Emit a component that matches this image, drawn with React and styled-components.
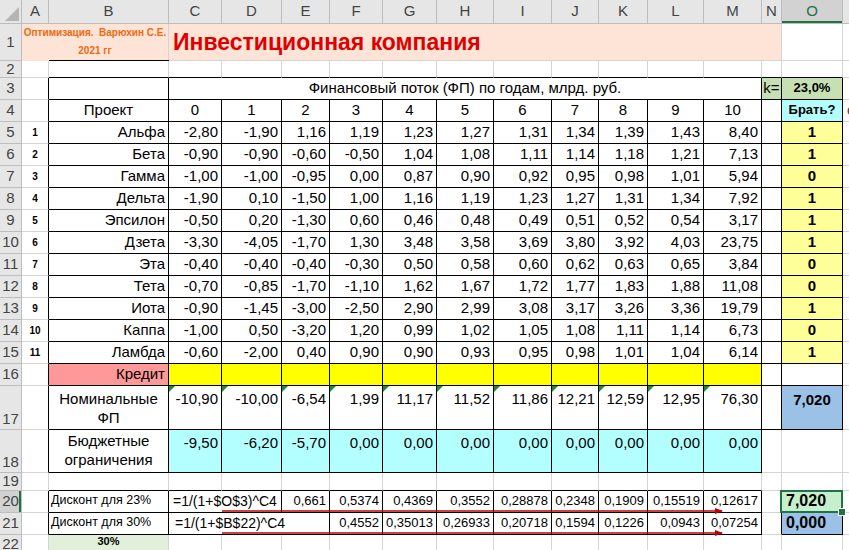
import React from "react";
import styled, { createGlobalStyle } from "styled-components";

const Global = createGlobalStyle`
  html,body{margin:0;padding:0;background:#fff;}
  body{font-family:"Liberation Sans",Arial,sans-serif;}
`;

const colW = [22,27,120,53,60,48,53,54,57,58,47,49,56,58,20,61];
const rowH = [24,37,17,22,22,...Array(11).fill(22),22,44,43,18,22,22];

const Sheet = styled.div`
  position: relative;
  width: 849px;
  height: 550px;
  overflow: hidden;
  display: grid;
  grid-template-columns: ${colW.map(w=>w+"px").join(" ")} 1fr;
  grid-template-rows: ${rowH.map(h=>h+"px").join(" ")} 1fr;
`;

const Cell = styled.div`
  grid-column: ${p=>p.$c+1} / span ${p=>p.$cs};
  grid-row: ${p=>p.$r+1} / span ${p=>p.$rs};
  box-sizing: border-box;
  position: relative;
  background: ${p=>p.$bg || "transparent"};
  border-right: 1px solid ${p=>p.$rb};
  border-bottom: 1px solid ${p=>p.$bb};
  display: flex;
  flex-direction: column;
  justify-content: ${p=>p.$valign==="top"?"flex-start":p.$valign==="middle"?"center":"flex-end"};
  align-items: ${p=>p.$align==="left"?"flex-start":p.$align==="center"?"center":"flex-end"};
  text-align: ${p=>p.$align};
  padding: ${p=>p.$pad || "0 3px 1px"};
  font-size: ${p=>p.$size||15}px;
  font-weight: ${p=>p.$bold?700:400};
  color: ${p=>p.$color||"#000"};
  white-space: nowrap;
  line-height: 1.25;
  overflow: visible;
  z-index: ${p=>p.$z||0};
  &::before{
    content: "";
    display: ${p=>p.$tri?"block":"none"};
    position: absolute; left:0; top:0;
    border-top: 6px solid #1e8a3a; border-right: 6px solid transparent;
  }
`;

const UnderB = styled.span`
  position:absolute; left:27px; right:-1px; bottom:-1px; height:1px; background:#000;
`;

const HeadCell = styled(Cell)`
  background: ${p=>p.$sel?"#d2d2d2":"#e6e6e6"};
  color: ${p=>p.$sel&&p.$r===0?"#217346":"#444"};
  justify-content: center;
  align-items: center;
  padding: 0;
  font-size: 15px;
  ${p=>p.$sel&&p.$r===0?"box-shadow: inset 0 -2px 0 #217346;":""}
  ${p=>p.$sel&&p.$c===0?"box-shadow: inset -2px 0 0 #217346;":""}
`;

const Corner = styled.svg`position:absolute; left:5px; top:7px;`;

const Selected = styled.div`
  position:absolute; inset:-1px -1px -1px -2px;
  border:2px solid #217346;
  &::after{content:"";position:absolute;right:-5px;bottom:-5px;width:6px;height:6px;background:#217346;border:1px solid #fff;}
`;

const Arrows = styled.svg`position:absolute; left:0; top:0; pointer-events:none; z-index:5;`;

const P = "#fde4d6", Y = "#ffff00", LY = "#ffff99", CY = "#b3ffff", GR = "#c6e0b4", BL = "#9bc2e6";

const projects = [
["Альфа","-2,80 -1,90 1,16 1,19 1,23 1,27 1,31 1,34 1,39 1,43 8,40",1],
["Бета","-0,90 -0,90 -0,60 -0,50 1,04 1,08 1,11 1,14 1,18 1,21 7,13",1],
["Гамма","-1,00 -1,00 -0,95 0,00 0,87 0,90 0,92 0,95 0,98 1,01 5,94",0],
["Дельта","-1,90 0,10 -1,50 1,00 1,16 1,19 1,23 1,27 1,31 1,34 7,92",1],
["Эпсилон","-0,50 0,20 -1,30 0,60 0,46 0,48 0,49 0,51 0,52 0,54 3,17",1],
["Дзета","-3,30 -4,05 -1,70 1,30 3,48 3,58 3,69 3,80 3,92 4,03 23,75",1],
["Эта","-0,40 -0,40 -0,40 -0,30 0,50 0,58 0,60 0,62 0,63 0,65 3,84",0],
["Тета","-0,70 -0,85 -1,70 -1,10 1,62 1,67 1,72 1,77 1,83 1,88 11,08",0],
["Иота","-0,90 -1,45 -3,00 -2,50 2,90 2,99 3,08 3,17 3,26 3,36 19,79",1],
["Каппа","-1,00 0,50 -3,20 1,20 0,99 1,02 1,05 1,08 1,11 1,14 6,73",0],
["Ламбда","-0,60 -2,00 0,40 0,90 0,90 0,93 0,95 0,98 1,01 1,04 6,14",1],
];
const nom = "-10,90 -10,00 -6,54 1,99 11,17 11,52 11,86 12,21 12,59 12,95 76,30".split(" ");
const bud = "-9,50 -6,20 -5,70 0,00 0,00 0,00 0,00 0,00 0,00 0,00 0,00".split(" ");
const d23 = "0,661 0,5374 0,4369 0,3552 0,28878 0,2348 0,1909 0,15519 0,12617".split(" ");
const d30 = "0,4552 0,35013 0,26933 0,20718 0,1594 0,1226 0,0943 0,07254".split(" ");

function buildCells() {
  const cells = [];
  const add = (r,c,o={}) => cells.push({r,c,rs:1,cs:1,align:"right",...o});
  add(1,1,{cs:2,bg:P,align:"center",valign:"top",size:10,bold:true,color:"#ed6a12",pad:"3px 0 0",under:true,text:<>Оптимизация.&nbsp; Варюхин С.Е.<br/><span style={{lineHeight:"22px"}}>2021 гг</span></>});
  add(1,3,{cs:12,bg:P,align:"left",valign:"middle",size:23,bold:true,color:"#e00000",pad:"0 4px",text:"Инвестиционная компания"});
  add(3,2,{box:true});
  add(3,3,{cs:11,box:true,align:"center",text:"Финансовый поток (ФП) по годам, млрд. руб."});
  add(3,14,{box:true,bg:GR,align:"center",pad:"0 0 1px",text:"k="});
  add(3,15,{box:true,bg:GR,align:"center",bold:true,size:13,pad:"0 0 3px",text:"23,0%"});
  add(4,2,{box:true,align:"center",text:"Проект"});
  for (let i=0;i<=10;i++) add(4,3+i,{box:true,align:"center",text:String(i)});
  add(4,14,{box:true});
  add(4,15,{box:true,bg:CY,align:"center",bold:true,size:13,pad:"0 0 3px",text:"Брать?"});
  add(4,16,{align:"left",text:"с",color:"#444",pad:"0 0 1px 4px"});
  projects.forEach(([n,v,t],i)=>{
    const r=5+i;
    add(r,1,{align:"center",bold:true,size:10,pad:"0 0 4px",text:String(i+1)});
    add(r,2,{box:true,text:n});
    v.split(" ").forEach((x,j)=>add(r,3+j,{box:true,text:x}));
    add(r,14,{box:true});
    add(r,15,{box:true,bg:LY,align:"center",bold:true,text:String(t)});
  });
  add(16,2,{box:true,bg:"#ff9999",text:"Кредит"});
  for (let i=0;i<11;i++) add(16,3+i,{box:true,bg:Y});
  add(16,14,{box:true}); add(16,15,{box:true});
  add(17,2,{box:true,align:"center",valign:"top",pad:"4px 0 0",text:<>Номинальные<br/>ФП</>});
  nom.forEach((x,j)=>add(17,3+j,{box:true,valign:"top",pad:"4px 3px 0",tri:true,text:x}));
  add(17,14,{box:true});
  add(17,15,{box:true,bg:BL,align:"center",valign:"top",bold:true,pad:"5px 0 0",text:"7,020"});
  add(18,2,{box:true,align:"center",valign:"top",pad:"2px 0 0",text:<>Бюджетные<br/>ограничения</>});
  bud.forEach((x,j)=>add(18,3+j,{box:true,bg:CY,valign:"top",pad:"4px 3px 0",text:x}));
  add(20,2,{box:true,align:"left",size:12.5,pad:"0 2px 3px",text:"Дисконт для 23%"});
  add(20,3,{cs:2,box:true,align:"left",size:14,pad:"0 4px 2px",text:"=1/(1+$O$3)^C4"});
  d23.forEach((x,j)=>add(20,5+j,{box:true,size:13,pad:"0 3px 3px",text:x}));
  add(20,15,{bg:"#c6efce",align:"left",bold:true,size:16,pad:"0 4px 1px",text:"7,020",sel:true,z:3});
  add(21,2,{box:true,align:"left",size:12.5,pad:"0 2px 3px",text:"Дисконт для 30%"});
  add(21,3,{cs:3,box:true,align:"left",size:14,pad:"0 6px 2px",text:"=1/(1+$B$22)^C4"});
  d30.forEach((x,j)=>add(21,6+j,{box:true,size:13,pad:"0 3px 3px",text:x}));
  add(21,15,{box:true,bg:BL,align:"left",bold:true,size:16,pad:"0 4px 1px",text:"0,000"});
  add(22,2,{bg:"#e2efda",align:"center",valign:"top",bold:true,size:11,pad:"0",text:"30%"});

  const black = new Set();
  cells.forEach(c=>{
    if(!c.box) return;
    for(let j=c.c;j<c.c+c.cs;j++){ black.add(`b${c.r+c.rs-1},${j}`); black.add(`b${c.r-1},${j}`); }
    for(let i=c.r;i<c.r+c.rs;i++){ black.add(`r${i},${c.c+c.cs-1}`); black.add(`r${i},${c.c-1}`); }
  });
  const covered = new Set();
  cells.forEach(c=>{for(let i=c.r;i<c.r+c.rs;i++)for(let j=c.c;j<c.c+c.cs;j++)covered.add(`${i},${j}`);});
  for(let i=1;i<=22;i++)for(let j=1;j<=16;j++) if(!covered.has(`${i},${j}`)) add(i,j,{});
  const G="#d4d4d4";
  cells.forEach(c=>{
    let rb=false,bb=false;
    for(let i=c.r;i<c.r+c.rs;i++) if(black.has(`r${i},${c.c+c.cs-1}`)) rb=true;
    for(let j=c.c;j<c.c+c.cs;j++) if(black.has(`b${c.r+c.rs-1},${j}`)) bb=true;
    c.rbC = rb?"#000":G; c.bbC = bb?"#000":G;
    if(c.under) c.bbC = P;
  });
  return cells;
}

const letters = ["A","B","C","D","E","F","G","H","I","J","K","L","M","N","O",""];

export default function App(){
  const cells = buildCells();
  return (
    <>
      <Global/>
      <Sheet>
        <HeadCell $c={0} $r={0} $cs={1} $rs={1} $rb="#bdbdbd" $bb="#bdbdbd">
          <Corner width="14" height="14"><polygon points="14,0 14,14 0,14" fill="#b5b5b5"/></Corner>
        </HeadCell>
        {letters.map((l,i)=>(
          <HeadCell key={"h"+i} $c={i+1} $r={0} $cs={1} $rs={1} $rb="#bdbdbd" $bb="#bdbdbd" $sel={i===14}>{l}</HeadCell>
        ))}
        {Array.from({length:22},(_,i)=>(
          <HeadCell key={"r"+i} $c={0} $r={i+1} $cs={1} $rs={1} $rb="#bdbdbd" $bb="#bdbdbd" $sel={i+1===20}
            style={{justifyContent:i+1===17||i+1===18?"flex-end":i+1===22?"flex-start":"center"}}>{i+1}</HeadCell>
        ))}
        {cells.map((c,k)=>(
          <Cell key={k} $c={c.c} $r={c.r} $cs={c.cs} $rs={c.rs} $bg={c.bg} $align={c.align} $valign={c.valign}
            $bold={c.bold} $size={c.size} $color={c.color} $pad={c.pad} $tri={c.tri} $z={c.z} $rb={c.rbC} $bb={c.bbC}>
            {c.text}
            {c.under && <UnderB/>}
            {c.sel && <Selected/>}
          </Cell>
        ))}
        <Arrows width="849" height="550">
          <defs>
            <marker id="ah" markerWidth="8" markerHeight="6" refX="7" refY="3" orient="auto" markerUnits="userSpaceOnUse">
              <polygon points="0,0 8,3 0,6" fill="#c00000"/>
            </marker>
          </defs>
          <line x1="222" y1="511" x2="722" y2="511" stroke="#c00000" strokeWidth="1.6" markerEnd="url(#ah)"/>
          <line x1="222" y1="533" x2="722" y2="533" stroke="#c00000" strokeWidth="1.6" markerEnd="url(#ah)"/>
        </Arrows>
      </Sheet>
    </>
  );
}
